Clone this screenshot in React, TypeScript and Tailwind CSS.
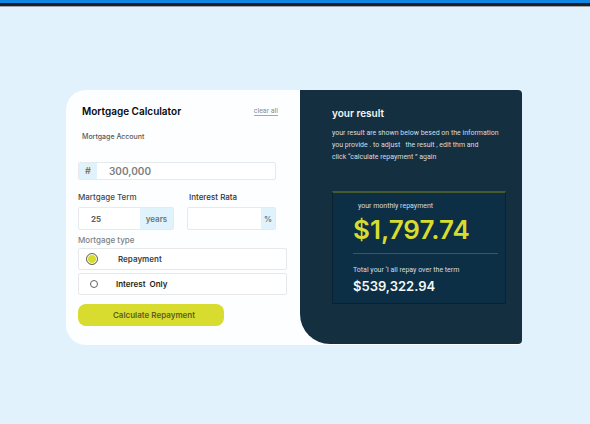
import { useState } from "react";

const field =
  "flex overflow-hidden rounded-xs border border-[#e6eaed] bg-white";
const addon =
  "flex shrink-0 items-center justify-center bg-[#e0f3fc] font-semibold text-[#6a7378]";
const option =
  "flex h-[22px] items-center rounded-xs border border-[#e6e9ec] bg-white pl-[7px] text-[8px] leading-3 font-semibold";
const radio =
  "shrink-0 appearance-none rounded-full border border-[#5f6366] bg-white size-2 checked:size-3 checked:bg-[#d8dc2f] checked:shadow-[inset_0_0_0_1px_white]";
const caption = "font-['Roboto',sans-serif] text-[7px] leading-3 font-normal";

export default function App() {
  const [type, setType] = useState("repayment");

  return (
    <div className="flex min-h-screen flex-col bg-[#e1f2fd] font-['Inter',sans-serif]">
      <header className="h-[7px] border-b border-[#9aa4aa] bg-[#1b1f23]">
        <div className="h-[3px] bg-[#0e87e4]" />
      </header>

      <main className="flex justify-center pt-[83px] pr-0.5">
        <div className="flex w-full max-w-[456px] rounded-l-[20px] rounded-r-sm bg-[#fdfeff]">
          <form
            className="w-[234px] shrink-0 pt-[13px] pr-[13px] pb-[19px] pl-3"
            onSubmit={(e) => e.preventDefault()}
          >
            <div className="flex h-4 items-center justify-between pr-[9px] pl-1">
              <h1 className="text-[10px] leading-4 font-semibold whitespace-nowrap text-[#08090a]">
                Mortgage Calculator
              </h1>
              <button
                type="reset"
                className="border-b border-[#a5a7a9] font-['Roboto',sans-serif] text-[7px] leading-[8px] text-[#8b8d8f]"
              >
                clear all
              </button>
            </div>

            <label
              htmlFor="amount"
              className="mt-3 block pl-1 text-[7px] leading-3 font-medium text-[#55585b]"
            >
              Mortgage Account
            </label>
            <div className={`${field} mt-[19px] mr-[11px] h-[18px]`}>
              <span className={`${addon} w-[18px] text-[9px]`}>#</span>
              <input
                id="amount"
                defaultValue="300,000"
                className="min-w-0 flex-1 pl-3 text-[10px] font-semibold text-[#7b7e81] outline-none"
              />
            </div>

            <div className="mt-[11px] mr-[11px] flex justify-between text-[8px] leading-3 font-medium text-[#45494c]">
              <div className="w-24">
                <label htmlFor="term" className="block">
                  Martgage Term
                </label>
                <div className={`${field} mt-1 h-[23px]`}>
                  <input
                    id="term"
                    defaultValue="25"
                    className="min-w-0 flex-1 pl-3 text-[8px] font-bold text-[#606366] outline-none"
                  />
                  <span className={`${addon} w-[33px] bg-[#d9f1fa]`}>years</span>
                </div>
              </div>
              <div className="w-[89px]">
                <label htmlFor="rate" className="block pl-0.5 text-[#303336]">
                  Interest Rata
                </label>
                <div className={`${field} mt-1 h-[23px]`}>
                  <input id="rate" className="min-w-0 flex-1 pl-3 outline-none" />
                  <span className={`${addon} w-[14px]`}>%</span>
                </div>
              </div>
            </div>

            <fieldset>
              <legend className="pt-1 text-[8px] leading-3 font-medium text-[#808386]">
                Mortgage type
              </legend>
              <div className="mt-0.5 flex flex-col gap-[3px]">
                <label className={`${option} text-[#3c3f42]`}>
                  <span className="mr-5 flex w-3 justify-end">
                    <input
                      type="radio"
                      name="type"
                      checked={type === "repayment"}
                      onChange={() => setType("repayment")}
                      className={radio}
                    />
                  </span>
                  Repayment
                </label>
                <label className={`${option} text-[#1c1e20]`}>
                  <span className="mr-[18px] flex w-3 justify-end">
                    <input
                      type="radio"
                      name="type"
                      checked={type === "interest"}
                      onChange={() => setType("interest")}
                      className={radio}
                    />
                  </span>
                  <span className="whitespace-pre">Interest  Only</span>
                </label>
              </div>
            </fieldset>

            <button
              type="submit"
              className="mt-[9px] block h-[22px] w-[146px] rounded-lg bg-[#d7dc2e] pl-1.5 text-[8px] leading-3 font-semibold text-[#5c5f1c]"
            >
              Calculate Repayment
            </button>
          </form>

          <section className="mb-px min-w-0 flex-1 rounded-r-sm rounded-bl-[30px] bg-[#132f40] pt-[15px] pr-4 pl-8 text-[#d5dde2]">
            <h2 className="text-[10px] leading-4 font-semibold text-[#f4f7f8]">
              your result
            </h2>
            <p className={`${caption} mt-1.5 whitespace-pre`}>
              {"your result are shown below besed on the information\nyou provide . to adjust   the result , edit thm and\nclick “calculate repayment ” again"}
            </p>

            <div className="mt-7 h-[113px] border border-t-2 border-[#0a2230] border-t-[#46592f] bg-[#0c2f45] pt-[7px] pr-[7px] pl-5">
              <h3 className={`${caption} pl-[5px]`}>your monthly repayment</h3>
              <p className="mt-0.5 text-[26px] leading-8 font-semibold text-[#d7dc2e]">
                $1,797.74
              </p>
              <hr className="mt-[7px] border-[#36566a]" />
              <h3 className={`${caption} mt-2.5`}>
                Total your ‘l all repay over the term
              </h3>
              <p className="mt-0.5 text-[13px] leading-4 font-semibold text-[#f4f7f8]">
                $539,322.94
              </p>
            </div>
          </section>
        </div>
      </main>
    </div>
  );
}
